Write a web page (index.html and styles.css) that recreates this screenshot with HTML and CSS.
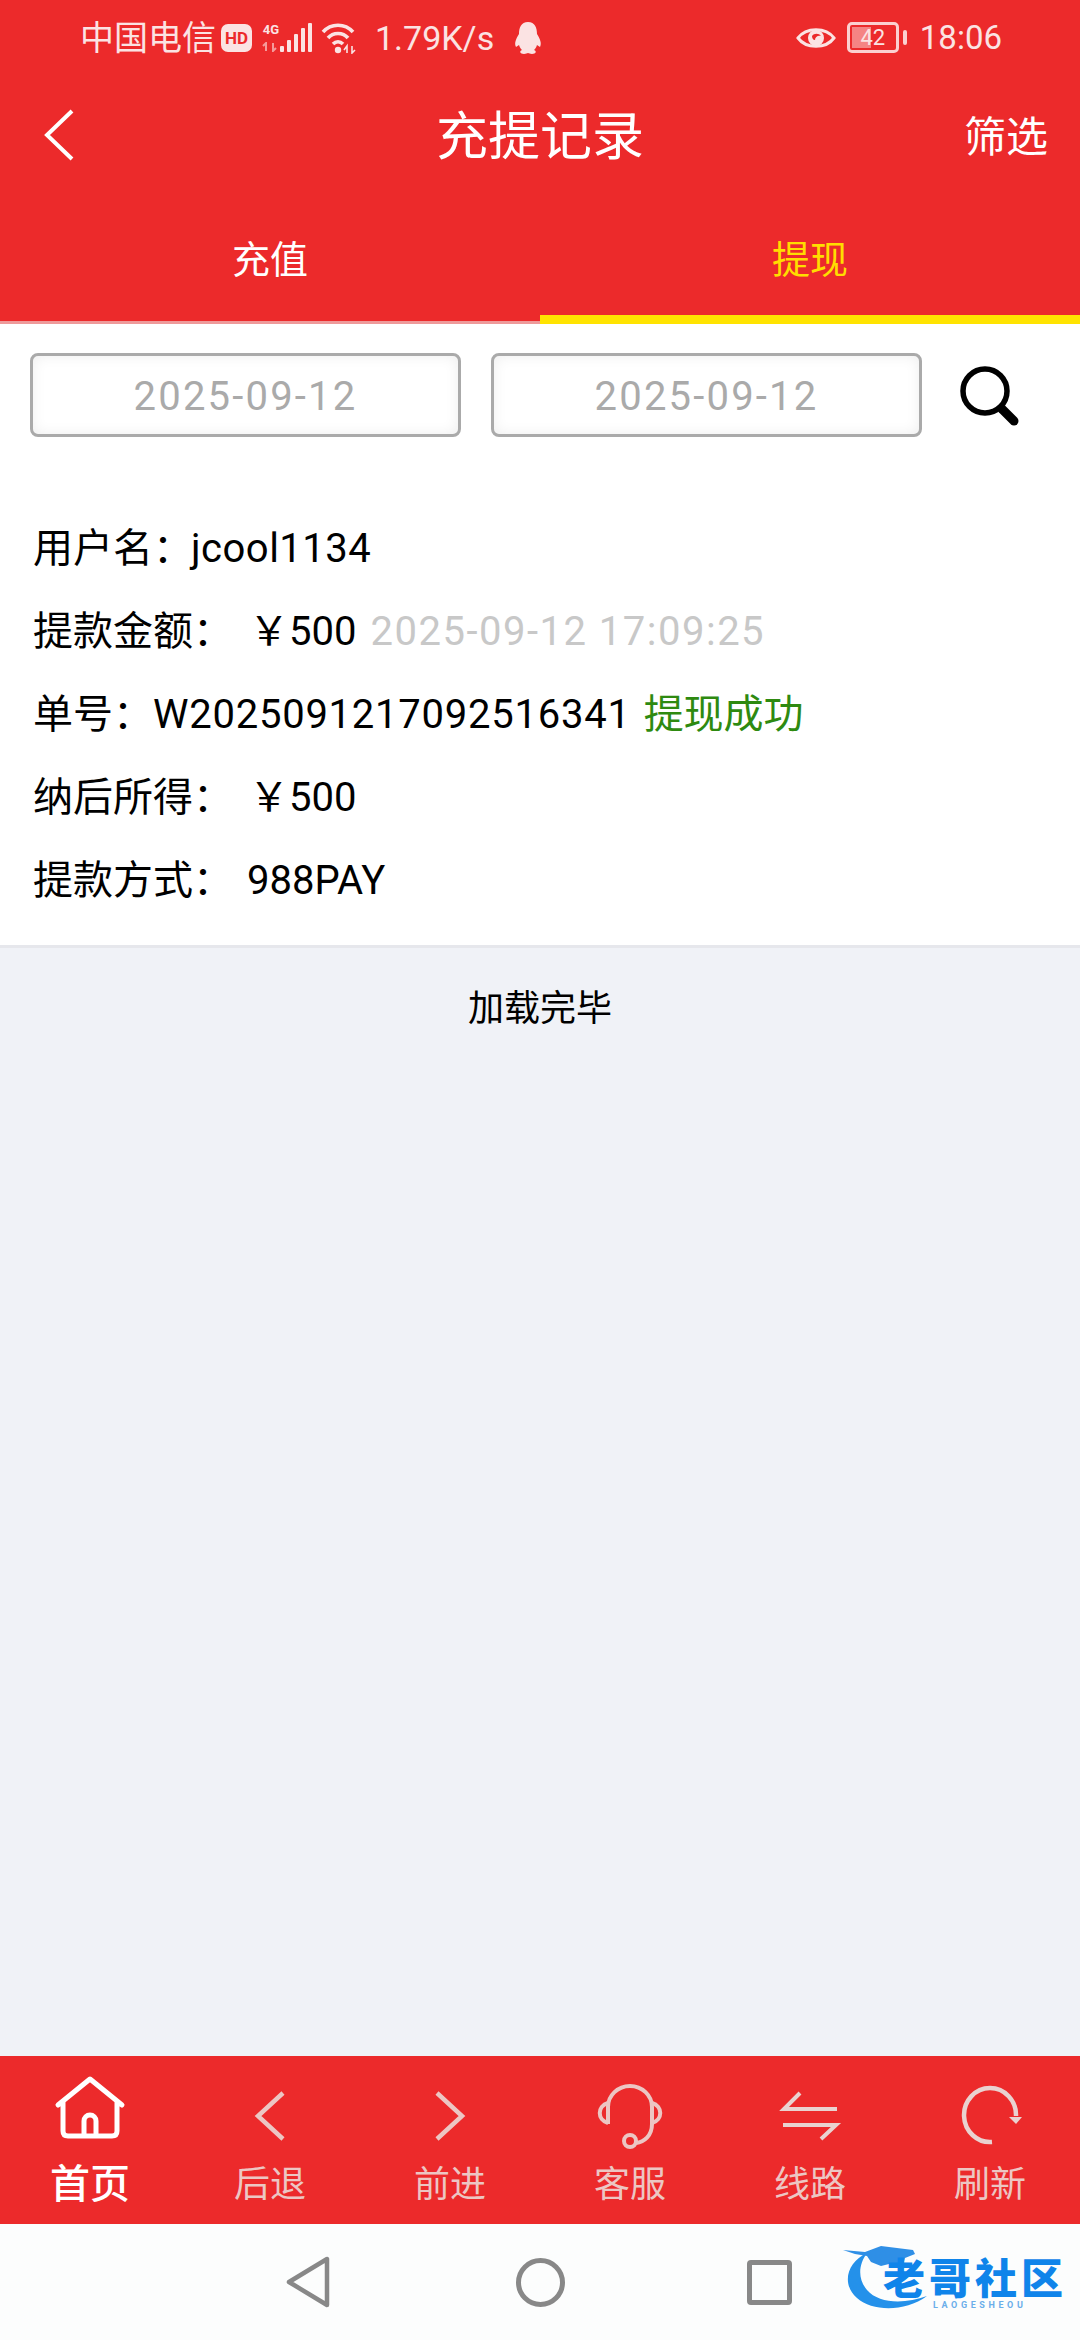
FILE: index.html
```html
<!DOCTYPE html>
<html lang="zh-CN">

<head>
    <meta charset="UTF-8">
    <meta name="viewport" content="width=device-width, initial-scale=1.0">
    <title>充提记录</title>
    <link rel="stylesheet" href="styles.css">
</head>

<body>
    <div class="page">
        <div class="topo">
            <div class="status">
                <div class="status__grupo">
                    <span class="status__texto">中国电信</span>
                    <span class="status__hd">HD</span>
                    <span class="status__rede">
                        <span class="status__4g">4G</span>
                        <svg class="status__setas" width="18" height="10" viewBox="0 0 18 10">
                            <path d="M4 9V1L1 4M11 1V9L14 6" fill="none" stroke="#f59a9a" stroke-width="2" />
                        </svg>
                    </span>
                    <svg class="status__barras" width="33" height="32" viewBox="0 0 33 32">
                        <g fill="#fbe3e3">
                            <rect x="0" y="24" width="4" height="6" rx="1" />
                            <rect x="7" y="18" width="4" height="12" rx="1" />
                            <rect x="14" y="12" width="4" height="18" rx="1" />
                            <rect x="21" y="6" width="4" height="24" rx="1" />
                            <rect x="28" y="1" width="4" height="29" rx="1" />
                        </g>
                    </svg>
                    <svg class="status__wifi" width="36" height="32" viewBox="0 0 36 32">
                        <g fill="none" stroke="#fbe3e3" stroke-width="3.6">
                            <path d="M2 10C10 1 24 1 32 10" />
                            <path d="M7 16C12 10 22 10 27 16" />
                            <path d="M12 22C15 19 19 19 22 22" />
                        </g>
                        <circle cx="17" cy="28" r="3.2" fill="#fbe3e3" />
                        <path d="M26 31V24L23 28M31 24V31L34 28" fill="none" stroke="#fbe3e3" stroke-width="1.6" />
                    </svg>
                    <span class="status__texto status__velocidade">1.79K/s</span>
                    <svg class="status__qq" width="30" height="34" viewBox="0 0 30 34">
                        <path d="M15 1C8 1 6 7 6 13C3 18 1 22 3 26L6 24C7 27 8 28 9 29C6 30 7 33 11 33C13 33 14 32 15 32C16 32 17 33 19 33C23 33 24 30 21 29C22 28 23 27 24 24L27 26C29 22 27 18 24 13C24 7 22 1 15 1Z" fill="#fbe3e3" />
                    </svg>
                </div>
                <div class="status__grupo">
                    <svg class="status__olho" width="40" height="26" viewBox="0 0 40 26">
                        <path d="M2 13C10 2 30 2 38 13C30 24 10 24 2 13Z" fill="none" stroke="#fbe3e3" stroke-width="3" />
                        <circle cx="20" cy="13" r="8" fill="#fbe3e3" />
                        <path d="M16 11C18 8 23 8 25 11C22 10 19 12 19 15C17 15 16 13 16 11Z" fill="#ec2a2b" />
                    </svg>
                    <span class="status__bateria"><span class="status__nivel"></span><span class="status__pct">42</span></span>
                    <span class="status__polo"></span>
                    <span class="status__texto status__hora">18:06</span>
                </div>
            </div>

            <div class="cabecalho">
                <svg class="cabecalho__voltar" width="30" height="52" viewBox="0 0 30 52">
                    <path d="M28 2L3 26L28 50" fill="none" stroke="#fff" stroke-width="4" />
                </svg>
                <h1 class="cabecalho__titulo">充提记录</h1>
                <span class="cabecalho__filtro">筛选</span>
            </div>

            <div class="abas">
                <div class="aba">充值</div>
                <div class="aba aba--ativa">提现</div>
            </div>
        </div>

        <div class="conteudo">
            <div class="registro">
                <div class="busca">
                    <input class="busca__data" type="text" value="2025-09-12" readonly>
                    <input class="busca__data" type="text" value="2025-09-12" readonly>
                    <svg class="busca__icone" width="62" height="62" viewBox="0 0 62 62">
                        <circle cx="25" cy="25" r="22" fill="none" stroke="#000" stroke-width="5.5" />
                        <path d="M42 43L54 55" fill="none" stroke="#000" stroke-width="9" stroke-linecap="round" />
                    </svg>
                </div>

                <div class="linha"><span class="linha__rotulo">用户名：</span><span class="linha__valor linha__valor--usuario">jcool1134</span></div>
                <div class="linha"><span class="linha__rotulo">提款金额：</span><span class="linha__valor linha__valor--dinheiro">￥500</span><span class="linha__data">2025-09-12 17:09:25</span></div>
                <div class="linha"><span class="linha__rotulo">单号：</span><span class="linha__valor linha__valor--numero">W2025091217092516341</span><span class="linha__sucesso">提现成功</span></div>
                <div class="linha"><span class="linha__rotulo">纳后所得：</span><span class="linha__valor linha__valor--dinheiro">￥500</span></div>
                <div class="linha"><span class="linha__rotulo">提款方式：</span><span class="linha__valor linha__valor--metodo">988PAY</span></div>
            </div>
            <p class="fim">加载完毕</p>
        </div>

        <div class="menu">
            <div class="menu__item menu__item--ativo">
                <svg class="menu__icone" width="72" height="76" viewBox="0 0 72 76">
                    <path d="M4 31L36 5L68 31M9 28V57Q9 62 14 62H58Q63 62 63 57V28M30 62V47A6 6 0 0 1 42 47V62" fill="none" stroke="#fff" stroke-width="5" stroke-linejoin="round" stroke-linecap="round" />
                </svg>
                <span class="menu__rotulo">首页</span>
            </div>
            <div class="menu__item">
                <svg class="menu__icone" width="72" height="76" viewBox="0 0 72 76">
                    <path d="M49 19L24 42L49 65" fill="none" stroke="#ecc6c3" stroke-width="4.5" />
                </svg>
                <span class="menu__rotulo">后退</span>
            </div>
            <div class="menu__item">
                <svg class="menu__icone" width="72" height="76" viewBox="0 0 72 76">
                    <path d="M23 19L48 42L23 65" fill="none" stroke="#ecc6c3" stroke-width="4.5" />
                </svg>
                <span class="menu__rotulo">前进</span>
            </div>
            <div class="menu__item">
                <svg class="menu__icone" width="72" height="76" viewBox="0 0 72 76">
                    <g fill="none" stroke="#ecc6c3" stroke-width="4">
                        <path d="M14 50V33A22 21 0 0 1 58 33V50C58 62 50 68 42 69" />
                        <path d="M14 29C3 32 3 46 14 49" />
                        <path d="M58 29C69 32 69 46 58 49" />
                        <circle cx="36" cy="67" r="6" />
                    </g>
                </svg>
                <span class="menu__rotulo">客服</span>
            </div>
            <div class="menu__item">
                <svg class="menu__icone" width="72" height="76" viewBox="0 0 72 76">
                    <path d="M63 35H10L26 19M9 51H62L47 65" fill="none" stroke="#e9d2d0" stroke-width="4" />
                </svg>
                <span class="menu__rotulo">线路</span>
            </div>
            <div class="menu__item">
                <svg class="menu__icone" width="72" height="76" viewBox="0 0 72 76">
                    <path d="M38 68A26 27 0 1 1 62 42" fill="none" stroke="#e9d2d0" stroke-width="4.5" />
                    <path d="M55 43H68L62 50Z" fill="#e9d2d0" />
                </svg>
                <span class="menu__rotulo">刷新</span>
            </div>
        </div>

        <div class="sistema">
            <svg width="44" height="52" viewBox="0 0 44 52" class="sistema__voltar">
                <path d="M41 3V49L3 26Z" fill="none" stroke="#888" stroke-width="4.5" stroke-linejoin="round" />
            </svg>
            <span class="sistema__inicio"></span>
            <span class="sistema__recentes"></span>

            <div class="marca">
                <svg class="marca__dragao" width="100" height="70" viewBox="0 0 100 70">
                    <path d="M24 11C4 20 -2 42 14 56C30 70 62 70 84 54C62 62 36 62 24 48C14 36 16 22 24 11Z" fill="#2491ea" />
                    <path d="M0 8L22 10L38 4L70 8L72 12L62 16L60 24L50 21L38 24L28 20L24 14L12 12Z" fill="#2f8fe6" />
                </svg>
                <span class="marca__nome">老哥社区</span>
                <span class="marca__latim">LAOGESHEOU</span>
            </div>
        </div>
    </div>
</body>

</html>
```

FILE: styles.css
```css
* {
    box-sizing: border-box;
}

body {
    margin: 0;
    font-family: "Roboto", "Noto Sans CJK SC", sans-serif;
    color: #000;
}

.page {
    display: flex;
    flex-direction: column;
    width: 1080px;
    height: 2340px;
    overflow: hidden;
}

.topo {
    background-color: #ec2a2b;
}

/* barra de status */
.status {
    display: flex;
    justify-content: space-between;
    align-items: center;
    height: 75px;
    padding: 0 78px 0 80px;
}

.status__grupo {
    display: flex;
    align-items: center;
}

.status__texto {
    color: #fbe3e3;
    font-size: 34px;
    line-height: 40px;
}

.status__hd {
    width: 31px;
    height: 28px;
    margin-left: 5px;
    border-radius: 7px;
    background-color: #fbe3e3;
    color: #ec2a2b;
    font-size: 17px;
    font-weight: 700;
    line-height: 28px;
    text-align: center;
}

.status__rede {
    display: flex;
    flex-direction: column;
    align-items: center;
    width: 18px;
    margin-left: 10px;
}

.status__4g {
    color: #fbe3e3;
    font-size: 13px;
    font-weight: 700;
    line-height: 14px;
}

.status__setas {
    margin-top: 5px;
}

.status__wifi {
    margin-left: 8px;
}

.status__velocidade {
    margin-left: 18px;
}

.status__qq {
    margin-left: 19px;
}

.status__olho {
    margin-right: 11px;
}

.status__bateria {
    position: relative;
    width: 52px;
    height: 31px;
    border: 3px solid #fbd0d0;
    border-radius: 5px;
    text-align: center;
}

.status__nivel {
    position: absolute;
    left: 2px;
    top: 2px;
    bottom: 2px;
    width: 19px;
    background-color: #f58484;
}

.status__pct {
    position: relative;
    display: block;
    color: #fbe3e3;
    font-size: 22px;
    line-height: 25px;
}

.status__polo {
    width: 4px;
    height: 15px;
    margin-left: 4px;
    border-radius: 2px;
    background-color: #fbd0d0;
}

.status__hora {
    margin-left: 13px;
    font-size: 33px;
}

/* cabecalho */
.cabecalho {
    position: relative;
    display: flex;
    align-items: center;
    justify-content: center;
    height: 120px;
    padding-bottom: 5px;
}

.cabecalho__voltar {
    position: absolute;
    left: 44px;
    top: 34px;
}

.cabecalho__titulo {
    margin: 0;
    color: #fff;
    font-size: 52px;
    font-weight: 400;
}

.cabecalho__filtro {
    position: absolute;
    right: 32px;
    top: 28px;
    color: #fff;
    font-size: 42px;
}

/* abas */
.abas {
    display: flex;
    height: 129px;
}

.aba {
    display: flex;
    flex: 1;
    align-items: center;
    justify-content: center;
    padding-bottom: 3px;
    border-bottom: 3px solid #ee9a9a;
    color: #fff;
    font-size: 38px;
}

.aba--ativa {
    padding: 3px 0 0;
    border-bottom: 9px solid #ffe300;
    color: #ffdd00;
}

/* conteudo */
.conteudo {
    flex: 1;
    background-color: #f0f2f7;
}

.registro {
    padding: 29px 0 23px 33px;
    border-bottom: 3px solid #e6e7ec;
    background-color: #fff;
}

.busca {
    display: flex;
    align-items: center;
    margin: 0 0 70px -3px;
}

.busca__data {
    width: 431px;
    height: 84px;
    margin-right: 30px;
    padding-top: 3px;
    border: 3px solid #aaa;
    border-radius: 8px;
    background-color: #fff;
    box-shadow: inset 0 0 14px rgba(0, 0, 0, 0.07);
    color: #aaa;
    font-family: inherit;
    font-size: 40px;
    letter-spacing: 2.2px;
    text-align: center;
}

.busca__icone {
    margin: 3px 0 0 8px;
}

.linha {
    height: 83px;
    font-size: 40px;
    line-height: 83px;
    white-space: nowrap;
}

.linha__valor--usuario {
    margin-left: -2px;
    letter-spacing: 0.5px;
}

.linha__valor--dinheiro {
    margin-left: 16px;
}

.linha__valor--numero {
    letter-spacing: 0.75px;
}

.linha__valor--metodo {
    margin-left: 14px;
}

.linha__data {
    margin-left: 14px;
    color: #c8c8c8;
    letter-spacing: 1.5px;
}

.linha__sucesso {
    margin-left: 13px;
    color: #2e8a10;
}

.fim {
    margin: 0;
    padding-top: 38px;
    font-size: 36px;
    line-height: 46px;
    text-align: center;
}

/* menu inferior */
.menu {
    display: flex;
    height: 168px;
    padding-top: 18px;
    background-color: #ec2a2b;
}

.menu__item {
    display: flex;
    flex: 1;
    flex-direction: column;
    align-items: center;
}

.menu__rotulo {
    margin-top: 13px;
    color: #ecc6c3;
    font-size: 36px;
    line-height: 44px;
}

.menu__item--ativo .menu__rotulo {
    color: #fff;
    font-size: 40px;
    font-weight: 500;
}

/* barra do sistema */
.sistema {
    position: relative;
    display: flex;
    align-items: center;
    height: 116px;
    padding-left: 286px;
    background-color: #fcfdfd;
}

.sistema__inicio {
    width: 49px;
    height: 49px;
    margin-left: 186px;
    border: 5px solid #888;
    border-radius: 50%;
}

.sistema__recentes {
    width: 45px;
    height: 45px;
    margin-left: 182px;
    border: 5px solid #888;
    border-radius: 4px;
}

.marca {
    position: absolute;
    left: 843px;
    top: 18px;
    width: 225px;
    height: 70px;
}

.marca__dragao {
    position: absolute;
    left: 0;
    top: 0;
}

.marca__nome {
    position: absolute;
    left: 40px;
    top: 20px;
    color: #0f84ea;
    font-size: 42px;
    font-weight: 900;
    letter-spacing: 4px;
    line-height: 36px;
    white-space: nowrap;
}

.marca__latim {
    position: absolute;
    left: 90px;
    top: 58px;
    color: #6aaeea;
    font-size: 9px;
    font-weight: 700;
    letter-spacing: 3.6px;
    line-height: 10px;
}
```
